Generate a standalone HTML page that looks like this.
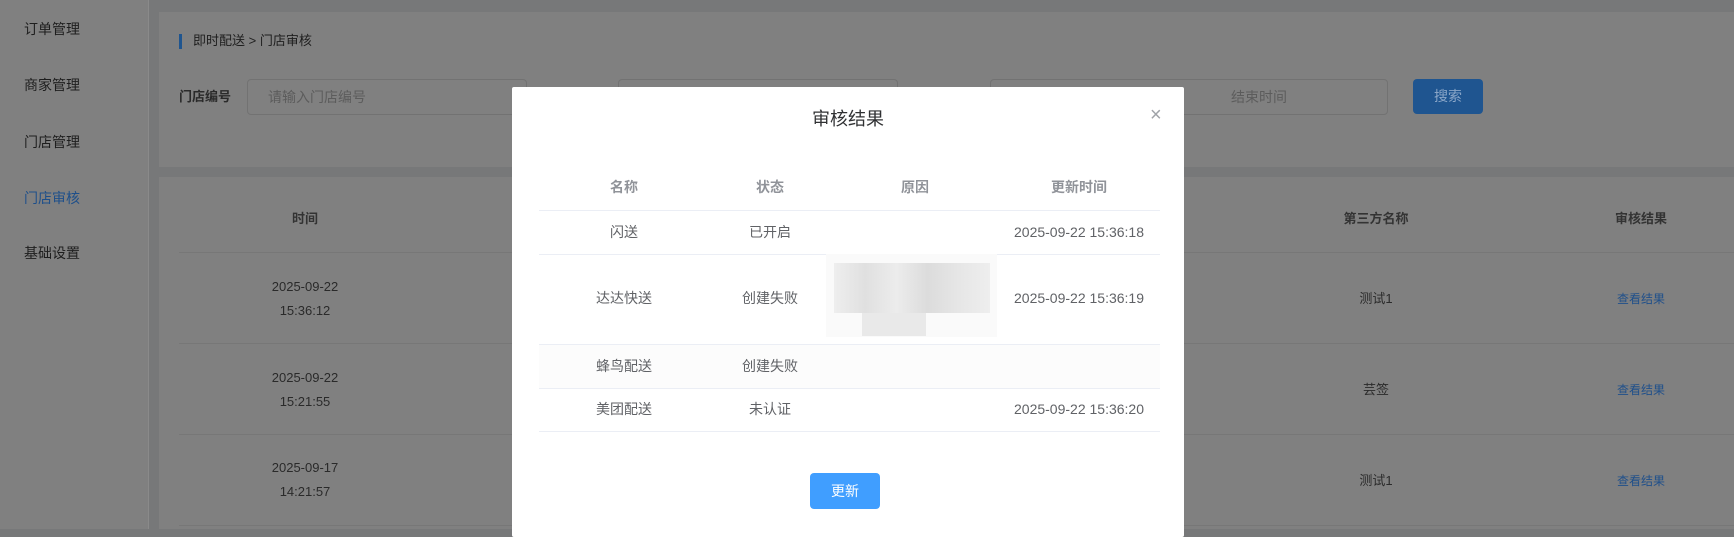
<!DOCTYPE html>
<html><head><meta charset="utf-8"><style>
*{margin:0;padding:0;box-sizing:border-box}
body{width:1734px;height:529px;overflow:hidden;background:#777879;font-family:"Liberation Sans","Noto Sans CJK SC",sans-serif;position:relative}
.a{position:absolute}
.side{left:0;top:0;width:149px;height:529px;background:#808080;border-right:1px solid #8a8a8a}
.side div{position:absolute;left:24px;font-size:14px;color:#1e1e1e;line-height:20px}
.p{background:#808080}
.t{position:absolute;font-size:13px;color:#2a2a2a;text-align:center;line-height:24px}
.h{font-weight:bold;color:#333}
.ln{position:absolute;height:1px;background:#777}
.inp{position:absolute;border:1px solid #727272;border-radius:4px;height:36px;top:79px;color:#5c5c5c;font-size:14px;line-height:34px}
.m{left:512px;top:87px;width:672px;height:450px;background:#fff;border-radius:2px}
.mt{position:absolute;font-size:14px;color:#606266;text-align:center;width:200px;line-height:20px}
.mh{color:#909399;font-weight:bold}
.ml{position:absolute;left:27px;width:621px;height:1px;background:#ebeef5}
</style></head><body>
<div class="a side">
<div style="top:19px">订单管理</div>
<div style="top:75px">商家管理</div>
<div style="top:132px">门店管理</div>
<div style="top:188px;color:#1e4f8a">门店审核</div>
<div style="top:243px">基础设置</div>
</div>
<div class="a p" style="left:159px;top:12px;width:1575px;height:155px"></div>
<div class="a" style="left:179px;top:34px;width:3px;height:15px;background:#1f558f"></div>
<div class="a" style="left:193px;top:31px;font-size:13px;color:#1e1e1e;line-height:20px">即时配送 &gt; 门店审核</div>
<div class="a" style="left:179px;top:87px;font-size:13px;font-weight:bold;color:#2a2a2a;line-height:20px">门店编号</div>
<div class="inp" style="left:247px;width:280px;padding-left:20px">请输入门店编号</div>
<div class="inp" style="left:618px;width:280px"></div>
<div class="inp" style="left:990px;width:398px;padding-left:240px">结束时间</div>
<div class="a" style="left:1413px;top:79px;width:70px;height:35px;background:#1f5590;border-radius:4px;color:#8aa6c8;font-size:14px;text-align:center;line-height:35px">搜索</div>
<div class="a p" style="left:159px;top:177px;width:1575px;height:352px"></div>
<div class="t h" style="left:245px;top:207px;width:120px">时间</div>
<div class="t h" style="left:1316px;top:207px;width:120px">第三方名称</div>
<div class="t h" style="left:1581px;top:207px;width:120px">审核结果</div>
<div class="ln" style="left:179px;top:252px;width:1555px"></div>
<div class="ln" style="left:179px;top:343px;width:1555px"></div>
<div class="ln" style="left:179px;top:434px;width:1555px"></div>
<div class="ln" style="left:179px;top:525px;width:1555px"></div>
<div class="t" style="left:245px;top:275px;width:120px">2025-09-22<br>15:36:12</div>
<div class="t" style="left:245px;top:366px;width:120px">2025-09-22<br>15:21:55</div>
<div class="t" style="left:245px;top:456px;width:120px">2025-09-17<br>14:21:57</div>
<div class="t" style="left:1316px;top:287px;width:120px">测试1</div>
<div class="t" style="left:1316px;top:378px;width:120px">芸签</div>
<div class="t" style="left:1316px;top:469px;width:120px">测试1</div>
<div class="t" style="left:1581px;top:287px;width:120px;color:#1f4f8a;font-size:12px">查看结果</div>
<div class="t" style="left:1581px;top:378px;width:120px;color:#1f4f8a;font-size:12px">查看结果</div>
<div class="t" style="left:1581px;top:469px;width:120px;color:#1f4f8a;font-size:12px">查看结果</div>

<div class="a m">
<div class="a" style="left:0;top:20px;width:672px;text-align:center;font-size:18px;color:#303133;line-height:24px">审核结果</div>
<div class="a" style="left:638px;top:18px;font-size:20px;color:#a0a3a8;line-height:20px">×</div>
<div class="mt mh" style="left:12px;top:90px">名称</div>
<div class="mt mh" style="left:158px;top:90px">状态</div>
<div class="mt mh" style="left:303px;top:90px">原因</div>
<div class="mt mh" style="left:467px;top:90px">更新时间</div>
<div class="ml" style="top:123px"></div>
<div class="mt" style="left:12px;top:135px">闪送</div>
<div class="mt" style="left:158px;top:135px">已开启</div>
<div class="mt" style="left:467px;top:135px">2025-09-22 15:36:18</div>
<div class="ml" style="top:167px"></div>
<div class="a" style="left:314px;top:167px;width:171px;height:83px;background:#fafafa"></div>
<div class="a" style="left:322px;top:176px;width:156px;height:50px;background:linear-gradient(90deg,#eee,#e0e0e0 20%,#ececec 40%,#dcdcdc 60%,#e6e6e6 80%,#eee)"></div>
<div class="a" style="left:350px;top:226px;width:64px;height:23px;background:#e9e9e9"></div>
<div class="mt" style="left:12px;top:201px">达达快送</div>
<div class="mt" style="left:158px;top:201px">创建失败</div>
<div class="mt" style="left:467px;top:201px">2025-09-22 15:36:19</div>
<div class="ml" style="top:257px"></div>
<div class="a" style="left:27px;top:258px;width:621px;height:43px;background:#fcfcfc"></div>
<div class="mt" style="left:12px;top:269px">蜂鸟配送</div>
<div class="mt" style="left:158px;top:269px">创建失败</div>
<div class="ml" style="top:301px"></div>
<div class="mt" style="left:12px;top:312px">美团配送</div>
<div class="mt" style="left:158px;top:312px">未认证</div>
<div class="mt" style="left:467px;top:312px">2025-09-22 15:36:20</div>
<div class="ml" style="top:344px"></div>
<div class="a" style="left:298px;top:386px;width:70px;height:36px;background:#409eff;border-radius:4px;color:#fff;font-size:14px;text-align:center;line-height:36px">更新</div>
</div>
</body></html>
